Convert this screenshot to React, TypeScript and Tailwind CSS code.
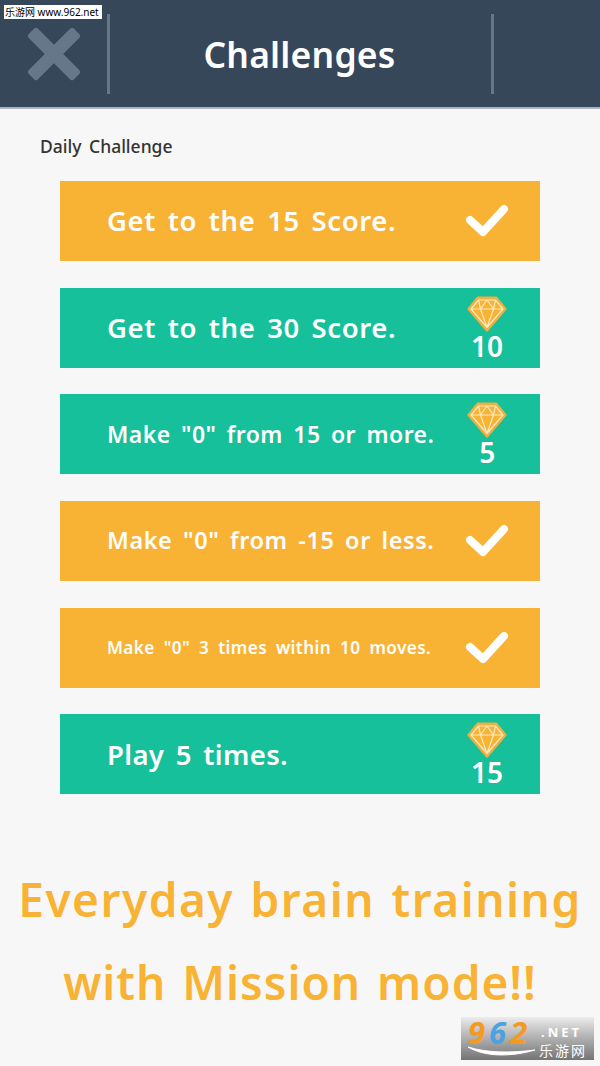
const font = { fontFamily: '"Noto Sans", "Noto Sans CJK SC", sans-serif' };

const challenges = [
  { text: "Get to the 15 Score.", size: "text-[27.5px] tracking-[0.6px]", done: true },
  { text: "Get to the 30 Score.", size: "text-[27.5px] tracking-[0.6px]", reward: 10 },
  { text: 'Make "0" from 15 or more.', size: "text-[23px] tracking-[0.45px]", reward: 5 },
  { text: 'Make "0" from -15 or less.', size: "text-[23.5px] tracking-[0.55px]", done: true },
  { text: 'Make "0" 3 times within 10 moves.', size: "text-[17.2px] tracking-[0.4px]", done: true },
  { text: "Play 5 times.", size: "text-[27.5px] tracking-[0.35px]", reward: 15 },
];

function Check() {
  return (
    <svg width="44" height="36" viewBox="0 0 44 36" fill="none">
      <path d="M5 17 L18 29 L39 6" stroke="#fff" strokeWidth="8" strokeLinecap="round" strokeLinejoin="round" />
    </svg>
  );
}

function Gem() {
  return (
    <svg width="40" height="36" viewBox="0 0 40 36" fill="none">
      <path d="M11 2 H29 L38 13 L20 34 L2 13 Z" fill="#f8b334" stroke="#eeb040" strokeWidth="3" strokeLinejoin="round" />
      <path
        d="M11.5 4 H28.5 L36 13 L20 31.5 L4 13 Z M4 13 H36 M11.5 4 L13.5 13 L20 31.5 L26.5 13 L28.5 4 M13.5 13 L20 4 L26.5 13"
        stroke="#fde9c0"
        strokeWidth="1.2"
        strokeLinejoin="round"
      />
    </svg>
  );
}

export default function App() {
  return (
    <div className="relative w-[600px] h-[1066px] overflow-hidden bg-[#f7f7f7]" style={font}>
      <header className="h-[109px] flex items-center bg-[#37475a] border-b-2 border-[#a9b2bd]">
        <div className="w-[107px] flex justify-center">
          <svg width="56" height="56" viewBox="0 0 56 56" fill="#66778a">
            <rect x="-4" y="21.5" width="64" height="13" rx="2.5" transform="rotate(45 28 28)" />
            <rect x="-4" y="21.5" width="64" height="13" rx="2.5" transform="rotate(-45 28 28)" />
          </svg>
        </div>
        <div className="w-[3px] h-[80px] bg-[#66778a]" />
        <h1 className="flex-1 text-center text-white text-[35.5px] font-semibold tracking-[0.2px] pt-[3px] pr-[2px]">Challenges</h1>
        <div className="w-[3px] h-[80px] bg-[#66778a]" />
        <div className="w-[106px]" />
      </header>

      <main className="pt-[26px]">
        <p className="pl-10 text-[17.5px] leading-[22px] font-medium text-[#333] [word-spacing:3px]">Daily Challenge</p>
        <div className="mt-[24px] mx-[60px] flex flex-col gap-[26.7px]">
          {challenges.map((c) => (
            <div
              key={c.text}
              className={`h-[80px] flex items-center justify-between pl-[47px] ${c.done ? "bg-[#f8b334]" : "bg-[#16c09a]"}`}
            >
              <span className={`${c.size} font-semibold text-[#fdfdfd] [word-spacing:4px] whitespace-nowrap`}>
                {c.text}
              </span>
              <div className="w-[106px] shrink-0 flex flex-col items-center">
                {c.done ? (
                  <Check />
                ) : (
                  <>
                    <Gem />
                    <span className="text-white text-[28px] leading-[28px] font-semibold">{c.reward}</span>
                  </>
                )}
              </div>
            </div>
          ))}
        </div>
        <div className="mt-[64px] text-center text-[#f8b334] text-[46px] leading-[83px] font-semibold [word-spacing:3px] whitespace-nowrap">
          <p className="tracking-[1.5px]">Everyday brain training</p>
          <p className="tracking-[1px]">with Mission mode!!</p>
        </div>
      </main>

      {/* watermarks */}
      <div className="absolute left-[4px] top-[5px] w-[98px] h-[14px] bg-white text-black text-[10px] leading-[14px] pl-[1px] whitespace-nowrap">
        乐游网 www.962.net
      </div>
      <div className="absolute left-[461px] top-[1017px] w-[133px] h-[43px] bg-gradient-to-b from-[#ececec] to-[#757575] flex items-start">
        <span className="w-[78px] shrink-0 pl-[7px] text-[31px] leading-[30px] font-bold italic text-[#f39a1f] tracking-[4px]">
          9<span className="text-[#4aa3e0]">6</span>2
        </span>
        <div className="w-[55px] shrink-0 flex flex-col items-start pt-[6px] text-white">
          <span className="pl-[2px] text-[13px] leading-[18px] font-bold tracking-[3px]">.NET</span>
          <span className="text-[14px] leading-[20px] tracking-[2px]">乐游网</span>
        </div>
        <svg className="absolute left-[6px] top-[26px]" width="70" height="16" viewBox="0 0 70 16" fill="none">
          <path d="M1 4 C18 14 44 14 68 7 C44 10 20 10 1 4 Z" fill="#fff" stroke="#fff" strokeWidth="1" />
        </svg>
      </div>
    </div>
  );
}
